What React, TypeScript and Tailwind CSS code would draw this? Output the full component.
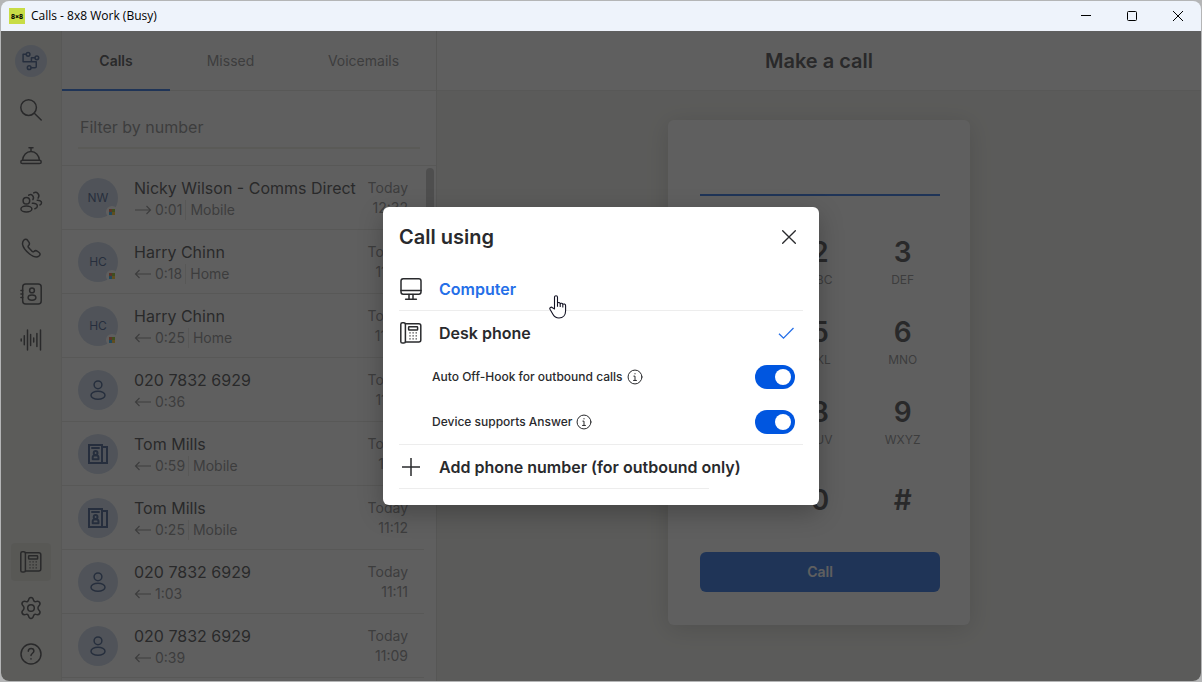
import type { ReactNode } from "react";

type IconProps = { children: ReactNode; size?: string; width?: number };

function Icon({ children, size = "size-6", width = 1.5 }: IconProps) {
  return (
    <svg
      viewBox="0 0 24 24"
      className={`${size} shrink-0`}
      fill="none"
      stroke="currentColor"
      strokeWidth={width}
      strokeLinecap="round"
      strokeLinejoin="round"
      aria-hidden="true"
    >
      {children}
    </svg>
  );
}

const deskPhone = (
  <>
    <rect x="1.8" y="1.8" width="4.6" height="20.2" rx="1.6" />
    <path d="M6.4 2.8h13.4a2 2 0 0 1 2 2V19a2 2 0 0 1-2 2H6.4" />
    <rect x="9.6" y="5.8" width="9" height="3.2" rx="0.6" />
    <path
      d="M10.4 11.9h1.2M13.5 11.9h1.2M16.6 11.9h1.2M10.4 14.9h1.2M13.5 14.9h1.2M16.6 14.9h1.2M10.4 17.9h1.2M13.5 17.9h1.2M16.6 17.9h1.2"
      strokeWidth="1.3"
      strokeLinecap="butt"
    />
  </>
);

const topNav: { label: string; icon: ReactNode }[] = [
  {
    label: "Search",
    icon: (
      <>
        <circle cx="9.6" cy="9.6" r="7.8" />
        <path d="m15.3 15.3 6.9 6.7" />
      </>
    ),
  },
  {
    label: "Switchboard",
    icon: (
      <>
        <path d="M10 3.7h4M12 3.8v3.4M3.6 16.2C4 11.2 7.4 7.4 12 7.4s8 3.8 8.4 8.8" />
        <rect x="1.8" y="16.2" width="20.4" height="3.4" rx="1.7" />
      </>
    ),
  },
  {
    label: "Contacts",
    icon: (
      <>
        <circle cx="7.4" cy="10.8" r="3.3" />
        <ellipse cx="7.4" cy="19" rx="5.5" ry="3" />
        <path d="M9.7 5.2c2.8-2 6 1.2 4.2 4.4M13.4 13.3c2.8-.3 5 1 5 2.7 0 1.4-1 2.2-2.5 2.7" />
        <path d="M14.7 2.9c3-2 6.8 1.6 4.4 5.2M18.2 10.3c2.4-.1 4.3 1 4.3 2.5 0 1-.6 1.8-1.6 2.2" />
      </>
    ),
  },
  {
    label: "Calls",
    icon: (
      <path d="M4.7 4.2c1.3-1.3 2.9-1.2 3.9.1l1.3 1.9c.8 1.2.6 2.4-.3 3.3-.7.7-.7 1.3-.1 2.1l3.3 3.5c.8.8 1.4.8 2.2.2 1-.8 2.1-.9 3.2-.1l1.9 1.3c1.2.9 1.3 2.1.2 3.2-2.2 2.1-5.6 1.6-9.7-1.7C6.5 14.7 4 11.2 3.6 8.4c-.2-1.8.1-3.2 1.1-4.2z" />
    ),
  },
  {
    label: "Directory",
    icon: (
      <>
        <rect x="3.7" y="2" width="18.5" height="20" rx="3" />
        <circle cx="13" cy="8.4" r="2.4" />
        <ellipse cx="13" cy="15.6" rx="3.9" ry="2.6" />
        <path d="M1.9 8.5h1.8M1.9 12h1.8M1.9 15.5h1.8" />
      </>
    ),
  },
  {
    label: "Recordings",
    icon: <path d="M2.2 11v2M5.3 7.7v9M8.5 2v20M11.6 6.5v11M14.7 10v4M17.9 5.5v13M21.5 2v20" />,
  },
];

const bottomNav: { label: string; icon: ReactNode; active?: boolean }[] = [
  { label: "Device", icon: deskPhone, active: true },
  {
    label: "Settings",
    icon: (
      <>
        <path d="M9.4 4.3C9.8 2.6 10.5 1.5 12 1.5s2.2 1.1 2.6 2.8c.3 1.100 1.200 1.600 2.300 1.300 1.700-.5 3-.4 3.800.9.800 1.300.2 2.500-1.100 3.700-.8.800-.8 2.800 0 3.600 1.300 1.200 1.900 2.400 1.100 3.700-.8 1.300-2.100 1.400-3.800.9-1.100-.3-2 .2-2.300 1.300-.4 1.700-1.100 2.800-2.600 2.800s-2.200-1.100-2.600-2.800c-.3-1.100-1.200-1.600-2.300-1.300-1.700.5-3 .4-3.800-.9-.8-1.300-.2-2.500 1.100-3.700.8-.8.8-2.800 0-3.600C3.100 9 2.500 7.800 3.300 6.500c.8-1.300 2.100-1.400 3.800-.9 1.100.3 2-.2 2.300-1.300z" />
        <circle cx="12" cy="12" r="3.3" />
      </>
    ),
  },
  {
    label: "Help",
    icon: (
      <>
        <circle cx="12" cy="12" r="10" />
        <path d="M9.3 9.3c0-1.8 1.2-2.9 2.8-2.9s2.8 1 2.8 2.6c0 2.3-2.9 2.2-2.9 4.6M12 16.7v.2" />
      </>
    ),
  },
];

type Call = {
  name: string;
  avatar: string;
  outgoing?: boolean;
  duration: string;
  place?: string;
  time: string;
};

const calls: Call[] = [
  { name: "Nicky Wilson - Comms Direct", avatar: "NW", outgoing: true, duration: "0:01", place: "Mobile", time: "12:32" },
  { name: "Harry Chinn", avatar: "HC", duration: "0:18", place: "Home", time: "11:58" },
  { name: "Harry Chinn", avatar: "HC", duration: "0:25", place: "Home", time: "11:49" },
  { name: "020 7832 6929", avatar: "person", duration: "0:36", time: "11:35" },
  { name: "Tom Mills", avatar: "book", duration: "0:59", place: "Mobile", time: "11:21" },
  { name: "Tom Mills", avatar: "book", duration: "0:25", place: "Mobile", time: "11:12" },
  { name: "020 7832 6929", avatar: "person", duration: "1:03", time: "11:11" },
  { name: "020 7832 6929", avatar: "person", duration: "0:39", time: "11:09" },
];

const keys: [string, string][] = [
  ["1", ""], ["2", "ABC"], ["3", "DEF"],
  ["4", "GHI"], ["5", "JKL"], ["6", "MNO"],
  ["7", "PQRS"], ["8", "TUV"], ["9", "WXYZ"],
];

function Avatar({ kind }: { kind: string }) {
  return (
    <div className="relative flex size-10 shrink-0 items-center justify-center rounded-full bg-[#c2d0e6] text-xs text-[#1f3f78]">
      {kind === "person" && (
        <Icon width={1.5}>
          <circle cx="12" cy="6.8" r="3.9" />
          <ellipse cx="12" cy="17.3" rx="7" ry="4" />
        </Icon>
      )}
      {kind === "book" && (
        <Icon width={2}>
          <path d="M3 3h13v18H3zM16 5h5v16h-5M6 6h7" strokeLinejoin="miter" />
          <circle cx="9.6" cy="11" r="1.9" />
          <path d="M6.7 17.2v-1.5c0-1.3.8-2.1 1.8-2.1h2.2c1 0 1.8.8 1.8 2.1v1.5z" />
        </Icon>
      )}
      {kind.length === 2 && (
        <>
          {kind}
          <span className="absolute right-0 bottom-0 flex size-3 items-center justify-center rounded-full bg-white">
            <svg viewBox="0 0 6 6" className="size-[6px]" aria-hidden="true">
              <path fill="#f25022" d="M0 0h3v3H0z" />
              <path fill="#7fba00" d="M3 0h3v3H3z" />
              <path fill="#00a4ef" d="M0 3h3v3H0z" />
              <path fill="#ffb900" d="M3 3h3v3H3z" />
            </svg>
          </span>
        </>
      )}
    </div>
  );
}

function CallRow({ call }: { call: Call }) {
  return (
    <li className="flex h-16 shrink-0 items-center gap-4 border-b border-[#e3e3de] px-4">
      <Avatar kind={call.avatar} />
      <div className="min-w-0 flex-1">
        <p className="text-base leading-6 whitespace-nowrap text-[#292a2d]">{call.name}</p>
        <p className="flex items-center text-sm leading-5 text-[#77787a]">
          <svg viewBox="0 0 18 10" className="mr-[3px] h-[10px] w-[18px]" fill="none" stroke="currentColor" strokeWidth="1.2" aria-hidden="true">
            {call.outgoing ? <path d="M1 5h15.5M12.500 1l4 4-4 4" /> : <path d="M17 5H1.500M5.500 1l-4 4 4 4" />}
          </svg>
          {call.duration}
          {call.place && <span className="ml-[3px] border-l border-[#e3e3de] pl-1">{call.place}</span>}
        </p>
      </div>
      <div className="text-right text-sm leading-5 text-[#77787a]">
        <p>Today</p>
        <p>{call.time}</p>
      </div>
    </li>
  );
}

function Toggle({ id, label }: { id: string; label: string }) {
  return (
    <div className="flex h-11 items-center justify-between pr-2 pl-[33px]">
      <div className="flex items-center gap-1">
        <label htmlFor={id} className="text-xs font-medium">{label}</label>
        <button type="button" aria-label={`About ${label}`}>
          <Icon size="size-4" width={1.5}>
            <circle cx="12" cy="12" r="10.4" />
            <path d="M12 6.8v.6M10.3 10.7H12V17M9.8 17.2h4.4" />
          </Icon>
        </button>
      </div>
      <input
        id={id}
        type="checkbox"
        role="switch"
        defaultChecked
        className="h-6 w-10 appearance-none rounded-full bg-gray-400 p-1 before:block before:size-4 before:rounded-full before:bg-white checked:bg-[#0056e0] checked:before:translate-x-4"
      />
    </div>
  );
}

function TitleBar() {
  return (
    <header className="flex h-[30px] shrink-0 items-center bg-[#eef3fb] pl-2 text-black">
      <span className="flex size-4 items-center justify-center bg-[#c8dc46] text-[6px] font-extrabold">8x8</span>
      <h1 className="ml-1.5 flex-1 font-['Open_Sans',sans-serif] text-xs">Calls - 8x8 Work (Busy)</h1>
      <button type="button" aria-label="Minimize" className="flex h-full w-[46px] items-center justify-center">
        <svg viewBox="0 0 10 10" className="size-[10px]" stroke="currentColor" aria-hidden="true"><path d="M0 4.5h10" /></svg>
      </button>
      <button type="button" aria-label="Maximize" className="flex h-full w-[46px] items-center justify-center">
        <svg viewBox="0 0 10 10" className="size-[10px]" fill="none" stroke="currentColor" aria-hidden="true"><rect x=".5" y=".5" width="9" height="9" rx="1" /></svg>
      </button>
      <button type="button" aria-label="Close" className="flex h-full w-[46px] items-center justify-center">
        <svg viewBox="0 0 10 10" className="size-[10px]" stroke="currentColor" aria-hidden="true"><path d="m0 0 10 10M10 0 0 10" /></svg>
      </button>
    </header>
  );
}

function Sidebar() {
  return (
    <nav className="flex w-[61px] shrink-0 flex-col items-center gap-2 border-r border-[#e3e3de] bg-[#f1f1eb] pt-3.5 pb-2 text-[#292a2d]">
      <button type="button" aria-label="Profile" className="mb-1.5 flex size-8 items-center justify-center rounded-full bg-[#c2d0e6] text-[#1f3f78]">
        <Icon size="size-5" width={1.8}>
          <circle cx="8.5" cy="4" r="2.2" />
          <circle cx="19" cy="8.2" r="2.2" />
          <circle cx="9.8" cy="20" r="2.2" />
          <path d="M6.3 4H2.500v9h15.800v5.500a1.500 1.500 0 0 1-1.500 1.500H12M16.800 8.200H12.500V13" />
        </Icon>
      </button>
      {topNav.map((item) => (
        <button key={item.label} type="button" aria-label={item.label} className="flex h-[38px] w-10 shrink-0 items-center justify-center rounded">
          <Icon>{item.icon}</Icon>
        </button>
      ))}
      <div className="flex-1" />
      {bottomNav.map((item) => (
        <button
          key={item.label}
          type="button"
          aria-label={item.label}
          className={`flex h-[38px] w-10 shrink-0 items-center justify-center rounded ${item.active ? "bg-[#e3e3d8]" : ""}`}
        >
          <Icon>{item.icon}</Icon>
        </button>
      ))}
    </nav>
  );
}

function CallList() {
  return (
    <section className="flex w-[375px] shrink-0 flex-col border-r border-[#dcdcd8] bg-white">
      <div className="flex h-[60px] shrink-0 border-b border-[#e3e3de] text-sm text-[#77787a]">
        <button type="button" className="-mb-px w-[108px] border-b-2 border-[#0056e0] pt-0.5 font-semibold text-[#292a2d]">Calls</button>
        <button type="button" className="w-[121px]">Missed</button>
        <button type="button" className="flex-1">Voicemails</button>
      </div>
      <div className="flex h-[75px] shrink-0 flex-col border-b border-[#e3e3de] px-4 pt-4">
        <input
          type="text"
          aria-label="Filter by number"
          placeholder="Filter by number"
          className="h-[42px] border-b-2 border-[#e9e9df] px-0.5 text-base outline-none placeholder:text-[#77787a]"
        />
      </div>
      <div className="flex min-h-0 flex-1 overflow-hidden">
        <ul className="flex min-w-0 flex-1 flex-col">
          {calls.map((call) => (
            <CallRow key={call.time} call={call} />
          ))}
        </ul>
        <div className="mx-0.5 mt-0.5 h-32 w-2 rounded-full bg-[#bcbcbc]" />
      </div>
    </section>
  );
}

function KeyButton({ digit, letters = "" }: { digit: string; letters?: string }) {
  return (
    <button type="button" className="flex h-20 flex-col items-center pt-6">
      <span className="text-[28px] leading-8 font-semibold">{digit}</span>
      <span className="mt-1 text-xs leading-4 text-[#77787a]">{letters}</span>
    </button>
  );
}

function Dialer() {
  return (
    <main className="flex min-w-0 flex-1 flex-col bg-[#f0f0ea] text-[#292a2d]">
      <h2 className="flex h-[60px] shrink-0 items-center justify-center border-b border-[#e3e3de] bg-white text-xl font-semibold">
        Make a call
      </h2>
      <div className="mx-auto mt-[29px] flex w-[302px] flex-col rounded-md bg-white pr-[30px] pb-[33px] pl-8 shadow-[0_4px_24px_rgba(0,0,0,0.2)]">
        <input type="tel" aria-label="Phone number" className="h-[76px] border-b-2 border-[#0056e0] text-center text-2xl outline-none" />
        <div className="-mx-1 mt-4 grid grid-cols-3">
          {keys.map(([digit, letters]) => (
            <KeyButton key={digit} digit={digit} letters={letters} />
          ))}
        </div>
        <div className="-mx-1 mt-2 mb-3 grid grid-cols-3">
          <KeyButton digit="*" />
          <KeyButton digit="0" />
          <KeyButton digit="#" />
        </div>
        <button type="button" className="h-10 rounded-md bg-[#0056e0] text-sm font-semibold text-white">Call</button>
      </div>
    </main>
  );
}

function CallUsingDialog() {
  return (
    <div
      role="dialog"
      aria-modal="true"
      aria-labelledby="call-using"
      className="relative w-[436px] rounded-md bg-white px-4 pt-2 pb-4 text-[#292a2d] shadow-[0_8px_24px_rgba(0,0,0,0.25)]"
    >
      <div className="flex h-[60px] items-start justify-between pt-1.5 pr-1.5">
        <h2 id="call-using" className="text-xl leading-8 font-semibold">Call using</h2>
        <button type="button" aria-label="Close dialog" className="flex h-8 items-center">
          <Icon size="size-4" width={2}><path d="M2.500 2.500l19 19M21.500 2.500l-19 19" /></Icon>
        </button>
      </div>
      <button type="button" className="flex h-9 w-full items-start gap-4 border-b border-[#ededed] text-base leading-7 font-semibold text-[#256fe8]">
        <span className="mt-0.5 text-[#292a2d]">
          <Icon>
            <rect x="2" y="1.8" width="20" height="15.4" rx="2.2" />
            <path d="M2 13.6h20M10 17.4V22M14 17.4V22M6.600 22.200h10.800" />
          </Icon>
        </span>
        Computer
      </button>
      <button type="button" className="flex h-11 w-full items-center gap-4 pr-2 text-base font-semibold">
        <Icon>{deskPhone}</Icon>
        <span className="flex-1 text-left">Desk phone</span>
        <svg viewBox="0 0 18 18" className="size-[18px]" fill="none" stroke="#256fe8" strokeWidth="1.3" aria-hidden="true">
          <path d="m2 9.700 4.500 4.500L16.500 4" />
        </svg>
      </button>
      <div className="flex flex-col gap-px">
        <Toggle id="auto-off-hook" label="Auto Off-Hook for outbound calls" />
        <Toggle id="supports-answer" label="Device supports Answer" />
      </div>
      <button type="button" className="flex h-11 w-full items-center gap-4 border-t border-[#ededed] text-base font-semibold">
        <Icon><path d="M12 3v18M3 12h18" strokeLinecap="butt" /></Icon>
        Add phone number (for outbound only)
      </button>
      <div className="mr-[94px] border-b border-[#ededed]" />
      <svg viewBox="0 0 18 24" className="absolute top-[88px] left-[166px] h-6 w-[18px]" fill="white" stroke="#111122" strokeWidth="1.1" strokeLinejoin="round" aria-hidden="true">
        <path d="M5.500 13.900V2.300c0-2.100 3-2.100 3 0v5.900c.5-1.100 2.500-.8 2.700.6.600-1 2.400-.7 2.600.6.900-.8 2.800-.5 2.800 1.300v5.100c0 4.100-2.400 7.200-6.600 7.200-3.100 0-4.900-1.400-6.100-3.700L1 14.300c-.8-1.600 1.200-2.900 2.500-1.500z" />
        <path d="M8.500 8.200v3.500M11.200 8.800v3.200M13.800 9.400v3" fill="none" />
      </svg>
    </div>
  );
}

export default function App() {
  return (
    <div className="h-screen min-h-[600px] bg-[#b4b5b6] p-px font-[Inter,sans-serif]">
      <div className="flex h-full flex-col overflow-hidden rounded-lg">
        <TitleBar />
        <div className="relative flex min-h-0 flex-1">
          <Sidebar />
          <CallList />
          <Dialer />
          <div className="absolute inset-0 flex items-center justify-center bg-[rgba(41,41,41,0.75)]">
            <CallUsingDialog />
          </div>
        </div>
      </div>
    </div>
  );
}
